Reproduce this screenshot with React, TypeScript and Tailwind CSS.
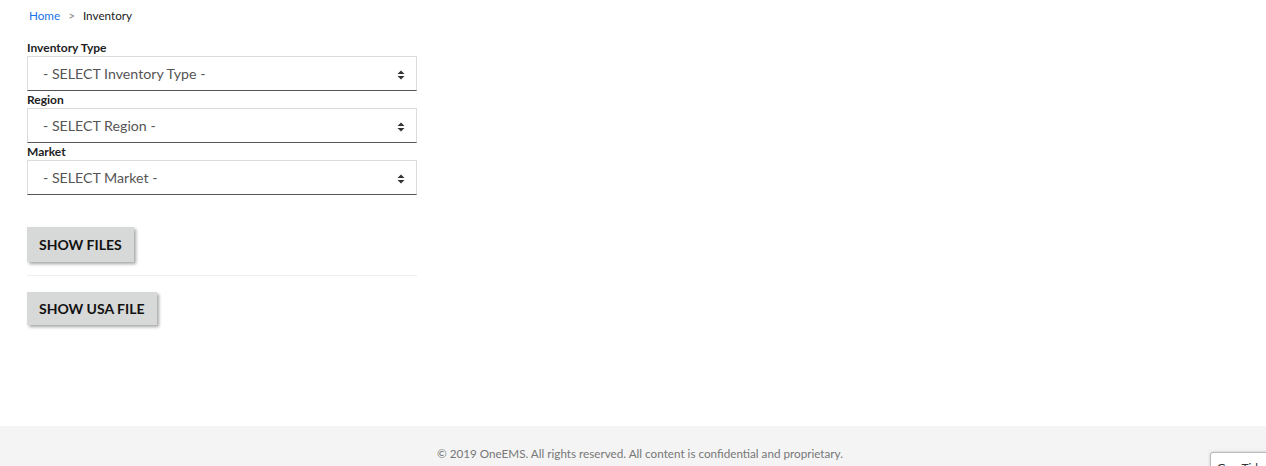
import React from "react";

const font = { fontFamily: 'Lato, "Noto Sans", sans-serif' };

function Sel({ label, text }: { label: string; text: string }) {
  return (
    <div className="flex flex-col">
      <label className="text-[12px] font-bold text-[#222] leading-[17px] h-[17px]">{label}</label>
      <div className="relative h-[35px] w-[390px] border border-[#dcdcdc] border-b-[#555] bg-white flex items-center pl-[15px] pt-[2px]">
        <span className="text-[14.2px] text-[#555] leading-none">{text}</span>
        <svg className="absolute right-[11px] top-[13px]" width="8" height="10" viewBox="0 0 8 10">
          <path d="M4 0.5 L7.5 4 L0.5 4 Z" fill="#333" />
          <path d="M4 9.5 L7.5 6 L0.5 6 Z" fill="#333" />
        </svg>
      </div>
    </div>
  );
}

export default function App() {
  return (
    <div className="relative w-[1266px] h-[466px] bg-white overflow-hidden flex flex-col" style={font}>
      <div className="flex-1 pl-[27px]">
        <div className="flex items-center h-[13px] mt-[9px] text-[11.7px] pl-[2px]">
          <span className="text-[#1a73e8]">Home</span>
          <span className="text-[#888] mx-[8px]">&gt;</span>
          <span className="text-[#222]">Inventory</span>
        </div>
        <div className="mt-[17px] flex flex-col w-[390px]">
          <Sel label="Inventory Type" text="- SELECT Inventory Type -" />
          <Sel label="Region" text="- SELECT Region -" />
          <Sel label="Market" text="- SELECT Market -" />
        </div>
        <div className="mt-[32px]">
          <button className="h-[35px] px-[12px] bg-[#d7d8d8] text-[14px] font-bold text-[#111] shadow-[2px_2px_3px_rgba(0,0,0,0.35)]">
            SHOW FILES
          </button>
        </div>
        <div className="w-[390px] border-t border-[#eeeeee] mt-[13px]" />
        <div className="mt-[16px]">
          <button className="h-[33px] px-[12px] bg-[#d7d8d8] text-[14px] font-bold text-[#111] shadow-[2px_2px_3px_rgba(0,0,0,0.35)]">
            SHOW USA FILE
          </button>
        </div>
      </div>
      <div className="h-[40px] bg-[#f4f4f4] flex justify-center pt-[19px] pl-[14px]">
        <span className="text-[11.7px] text-[#777]">© 2019 OneEMS. All rights reserved. All content is confidential and proprietary.</span>
      </div>
      <div className="absolute left-[1210px] top-[452px] w-[80px] h-[30px] bg-white border border-[#bbb] rounded-[3px] shadow-[0_0_3px_rgba(0,0,0,0.2)] pl-[6px] pt-[6px] text-[12px] text-[#333] whitespace-nowrap">
        Gen Tid
      </div>
    </div>
  );
}
